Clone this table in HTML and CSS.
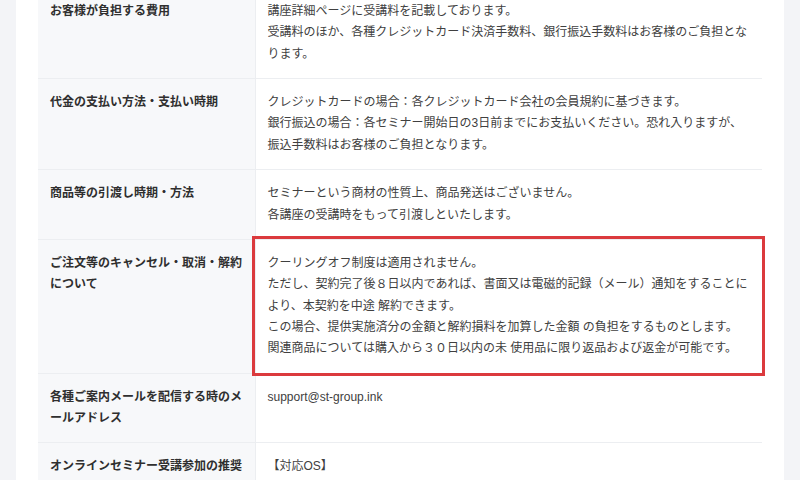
FILE: index.html
```html
<!DOCTYPE html>
<html lang="ja">
<head>
<meta charset="utf-8">
<title>特定商取引法に基づく表記</title>
<link rel="stylesheet" href="styles.css">
</head>
<body>
<main class="page">
  <table class="law-table">
    <colgroup>
      <col class="col-head">
      <col class="col-body">
    </colgroup>
    <tbody>
      <tr>
        <th>お客様が負担する費用</th>
        <td>講座詳細ページに受講料を記載しております。<br>受講料のほか、各種クレジットカード決済手数料、銀行振込手数料はお客様のご負担となります。</td>
      </tr>
      <tr>
        <th>代金の支払い方法・支払い時期</th>
        <td>クレジットカードの場合：各クレジットカード会社の会員規約に基づきます。<br>銀行振込の場合：各セミナー開始日の3日前までにお支払いください。恐れ入りますが、<br>振込手数料はお客様のご負担となります。</td>
      </tr>
      <tr>
        <th>商品等の引渡し時期・方法</th>
        <td>セミナーという商材の性質上、商品発送はございません。<br>各講座の受講時をもって引渡しといたします。</td>
      </tr>
      <tr>
        <th>ご注文等のキャンセル・取消・解約について</th>
        <td class="highlight">クーリングオフ制度は適用されません。<br>ただし、契約完了後８日以内であれば、書面又は電磁的記録（メール）通知をすることにより、本契約を中途 解約できます。<br>この場合、提供実施済分の金額と解約損料を加算した金額 の負担をするものとします。<br>関連商品については購入から３０日以内の未 使用品に限り返品および返金が可能です。</td>
      </tr>
      <tr>
        <th>各種ご案内メールを配信する時のメールアドレス</th>
        <td>support@st-group.ink</td>
      </tr>
      <tr>
        <th>オンラインセミナー受講参加の推奨環境</th>
        <td>【対応OS】</td>
      </tr>
    </tbody>
  </table>
</main>
</body>
</html>
```

FILE: styles.css
```css
html, body {
  margin: 0;
  padding: 0;
}

body {
  background: #f3f4f7;
  font-family: "Liberation Sans", "Noto Sans CJK JP", sans-serif;
  font-size: 12px;
  color: #3a3a3a;
  overflow: hidden;
  height: 480px;
}

.page {
  margin: 0 16px;
  background: #ffffff;
  padding: 0 22px;
  min-height: 480px;
  overflow: hidden;
}

.law-table {
  width: 724px;
  margin-top: -12px;
  border-collapse: collapse;
  table-layout: fixed;
}

.col-head {
  width: 217px;
}

.law-table th,
.law-table td {
  padding: 13px 12px;
  line-height: 1.78;
  vertical-align: top;
  text-align: left;
  border-bottom: 1px solid #eceef1;
}

.law-table th {
  background: #f7f8fa;
  font-weight: bold;
  color: #2f2f2f;
  padding-right: 6px;
  border-right: 1px solid #eceef1;
}

.law-table td {
  background: #ffffff;
  font-weight: normal;
  color: #404040;
}

.law-table td.highlight {
  outline: 3px solid #db3a3d;
  outline-offset: 0;
}
```
